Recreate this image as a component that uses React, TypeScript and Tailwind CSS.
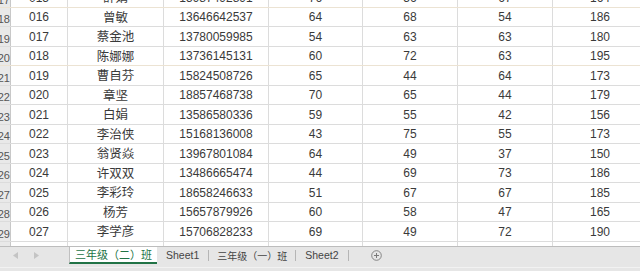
import { Fragment } from "react";

type Row = [string, string, string, string, string, string, string];

const rows: Row[] = [
  ["015", "薛娟", "15987492891", "76", "56", "67", "164"],
  ["016", "曾敏", "13646642537", "64", "68", "54", "186"],
  ["017", "蔡金池", "13780059985", "54", "63", "63", "180"],
  ["018", "陈娜娜", "13736145131", "60", "72", "63", "195"],
  ["019", "曹自芬", "15824508726", "65", "44", "64", "173"],
  ["020", "章坚", "18857468738", "70", "65", "44", "179"],
  ["021", "白娟", "13586580336", "59", "55", "42", "156"],
  ["022", "李治侠", "15168136008", "43", "75", "55", "173"],
  ["023", "翁贤焱", "13967801084", "64", "49", "37", "150"],
  ["024", "许双双", "13486665474", "44", "69", "73", "186"],
  ["025", "李彩玲", "18658246633", "51", "67", "67", "185"],
  ["026", "杨芳", "15657879926", "60", "58", "47", "165"],
  ["027", "李学彦", "15706828233", "69", "49", "72", "190"],
  ["028", "", "", "", "", "", ""],
];

// cell widths incl. right border
const widths = ["w-[57px]", "w-[96px]", "w-[105px]", "w-[94px]", "w-[95px]", "w-[95px]", "w-[95px]"];

const num = "font-['Liberation_Sans',Arial,sans-serif] text-[12px] text-[#3a3a3a]";
const cjk = "font-['Noto_Sans_CJK_SC',sans-serif] text-[12.5px] text-[#3a3a3a]";

const tabs = [
  { label: "三年级（二）班", active: true },
  { label: "Sheet1" },
  { label: "三年级（一）班" },
  { label: "Sheet2" },
];

export default function App() {
  return (
    <div className="w-[640px] h-[271px] overflow-hidden bg-white flex flex-col">
      <div className="h-[246px] overflow-hidden shrink-0">
        <div className="-mt-[12px]">
          {rows.map((r, i) => (
            <div
              key={r[0]}
              className={`flex border-b border-[#dcdcdc] ${i % 2 === 0 ? "h-[20px]" : "h-[19px]"} ${
                i === 0 || i === 3 ? "border-[#ece3d3]" : ""
              }`}
            >
              <div className="w-[11px] shrink-0 bg-[#e9e9e9] border-r border-[#c8c8c8] overflow-hidden flex items-end justify-end pb-[1px]">
                <span className="font-['Liberation_Sans',Arial,sans-serif] text-[11px] leading-none text-[#555] whitespace-nowrap">
                  {i + 17}
                </span>
              </div>
              {r.map((c, j) => (
                <div
                  key={j}
                  className={`${widths[j]} shrink-0 border-r border-[#dcdcdc] flex items-center justify-center whitespace-nowrap ${
                    j === 1 ? cjk : num
                  }`}
                >
                  {c}
                </div>
              ))}
            </div>
          ))}
        </div>
      </div>

      <div className="h-[25px] shrink-0 bg-[#e6e6e6] border-t border-[#bdbdbd] flex flex-col">
        <div className="h-[17px] flex items-stretch">
          <div className="w-[69px] flex items-center gap-[16px] pl-[13px]">
            <svg width="5" height="7" viewBox="0 0 5 7">
              <path d="M5 0 L0 3.5 L5 7 Z" fill="#c4c4c4" />
            </svg>
            <svg width="5" height="7" viewBox="0 0 5 7">
              <path d="M0 0 L5 3.5 L0 7 Z" fill="#c4c4c4" />
            </svg>
          </div>
          {tabs.map((t, i) => (
            <Fragment key={t.label}>
              {t.active ? (
                <div className="w-[88px] bg-white border-l border-[#c0c0c0] border-b-2 border-b-[#217346] flex items-center justify-center font-['Noto_Sans_CJK_SC',sans-serif] text-[11px] text-[#217346] whitespace-nowrap">
                  {t.label}
                </div>
              ) : (
                <div
                  className={`flex items-center justify-center whitespace-nowrap text-[#444] ${
                    t.label.startsWith("Sheet")
                      ? "font-['Liberation_Sans',Arial,sans-serif] text-[10.5px] px-[9px]"
                      : "font-['Noto_Sans_CJK_SC',sans-serif] text-[10px] px-[8px]"
                  }`}
                >
                  {t.label}
                </div>
              )}
              {i > 0 && <div className="w-px my-[3px] bg-[#b5b5b5]" />}
            </Fragment>
          ))}
          <div className="flex items-center pl-[22px]">
            <svg width="11" height="11" viewBox="0 0 11 11">
              <circle cx="5.5" cy="5.5" r="4.8" fill="none" stroke="#7a7a7a" strokeWidth="0.9" />
              <path d="M5.5 3 V8 M3 5.5 H8" stroke="#7a7a7a" strokeWidth="1" />
            </svg>
          </div>
        </div>
        <div className="mt-auto h-[4px] border-t border-[#f2f2f2]" />
      </div>
    </div>
  );
}
